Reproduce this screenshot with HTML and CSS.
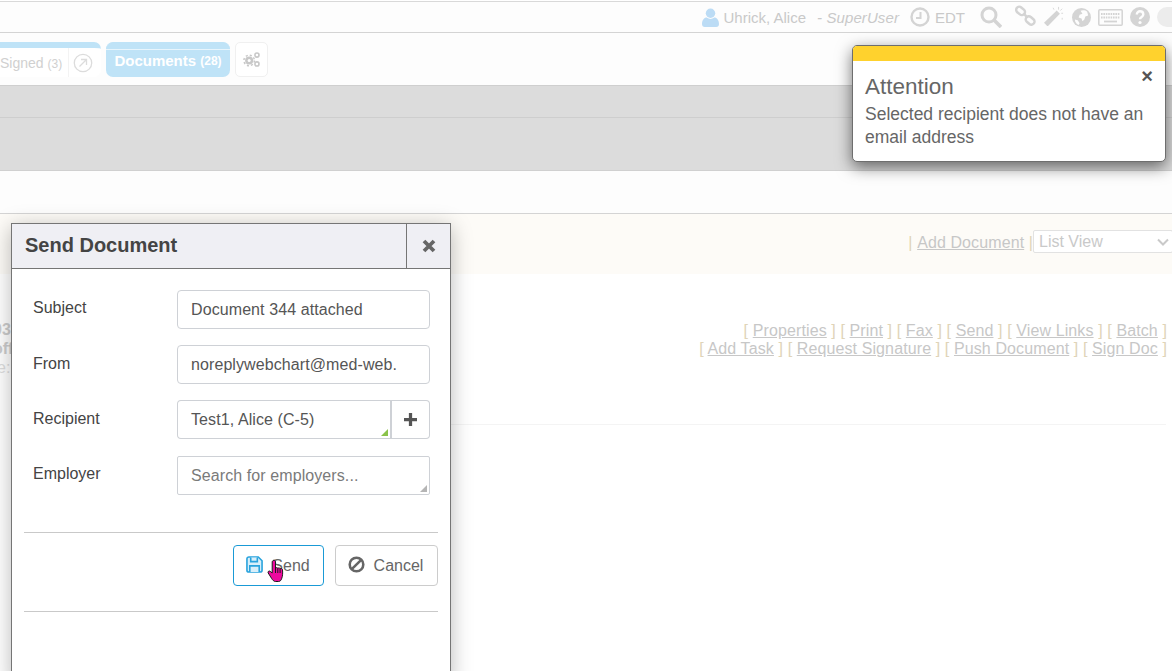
FILE: index.html
```html
<!DOCTYPE html>
<html lang="en">
<head>
<meta charset="utf-8">
<title>Send Document</title>
<link rel="stylesheet" href="styles.css">
</head>
<body>
<div class="page">
  <header class="topbar">
    <svg class="ico user" viewBox="0 0 18 20"><circle cx="9" cy="5.500" r="5"/><path d="M0 17c0-5 3-7 5-7 1.200 1 2.600 1.500 4 1.500s2.800-.5 4-1.500c2 0 5 2 5 7 0 2-1 3-3 3H3c-2 0-3-1-3-3z"/></svg>
    <span class="who">Uhrick, Alice</span>
    <em class="role">- SuperUser</em>
    <svg class="ico clock" viewBox="0 0 20 20"><circle cx="10" cy="10" r="8.500" fill="none" stroke-width="2.400"/><path d="M10.500 5v6H6" fill="none" stroke-width="2"/></svg>
    <span class="tz">EDT</span>
    <svg class="ico search" viewBox="0 0 22 22"><circle cx="9" cy="9" r="7" fill="none" stroke-width="3"/><path d="M14 14l7 7" fill="none" stroke-width="3.600"/></svg>
    <svg class="ico link" viewBox="0 0 22 22"><g fill="none" stroke-width="2.600"><rect x="1" y="3" width="10" height="6.500" rx="3.200" transform="rotate(40 6 6)"/><rect x="11" y="13" width="10" height="6.500" rx="3.200" transform="rotate(40 16 16)"/><path d="M9 9l4 4"/></g></svg>
    <svg class="ico wand" viewBox="0 0 22 22"><path d="M0 18.500L14 5l3.500 3.500L4 22.500z" stroke="none"/><path d="M16 1v3M20 3l-2 2M21 8h-2M10 2l1 2M20 13v2" fill="none" stroke-width="1"/></svg>
    <svg class="ico globe" viewBox="0 0 20 20"><circle cx="10" cy="10" r="10" stroke="none"/><path class="cut" d="M9 3c2-1 5-1 7 1l1 4-3 1-1 3-2 2-1-3-3-1 1-3 3-1zM3 12l3 1 2 3-1 2c-2-1-4-3-4-6z" stroke="none"/></svg>
    <svg class="ico keys" viewBox="0 0 25 17"><rect x=".8" y=".8" width="23.400" height="15.400" rx="1" fill="none" stroke-width="1.500"/><path d="M3 5h19M3 8.500h19" fill="none" stroke-width="1.800" stroke-dasharray="1.600 .8"/><path d="M6 12.500h13" fill="none" stroke-width="1.800"/></svg>
    <svg class="ico help" viewBox="0 0 20 20"><circle cx="10" cy="10" r="10" stroke="none"/><path class="cutline" d="M6.800 7.500c0-4.300 6.500-4.300 6.500 0 0 2.500-3.300 2.300-3.300 4.700" fill="none" stroke-width="2.400"/><circle class="cutfill" cx="10" cy="15.500" r="1.600" stroke="none"/></svg>
    <span class="avatar"></span>
  </header>

  <nav class="tabbar">
    <div class="tab tab-signed">
      <span class="tab-label">Signed <small>(3)</small></span>
      <span class="tab-pop"><svg viewBox="0 0 20 20"><circle cx="10" cy="10" r="8.700"/><path d="M6.500 13.500l7-7M8 6.500h5.500V12"/></svg></span>
    </div>
    <div class="tab tab-docs"><b>Documents</b>&nbsp;<b class="count">(28)</b></div>
    <button class="gear" type="button" aria-label="Settings">
      <svg viewBox="0 0 18 16"><circle class="g-body" cx="6.500" cy="9" r="4.300"/><circle class="g-teeth" cx="6.500" cy="9" r="5.600" stroke-dasharray="2.200 2.200"/><circle class="g-hole" cx="6.500" cy="9" r="1.600"/><circle class="g-small" cx="14.800" cy="3.300" r="2.200"/><circle class="g-small" cx="14.800" cy="12.700" r="2.200"/></svg>
    </button>
  </nav>

  <div class="grey-row grey-a"></div>
  <div class="grey-row grey-b"></div>
  <div class="plain-row"></div>

  <div class="cream">
    <span class="cream-links"><span class="pipe">|</span>&nbsp;<a>Add Document</a>&nbsp;<span class="pipe">|</span></span><span class="select">List View<svg viewBox="0 0 12 8"><path d="M1 1.500l5 5 5-5"/></svg></span>
  </div>

  <main class="content">
    <div class="stub"><b>03</b><b>off</b><span>e:</span></div>
    <div class="actions">
      <p><i>[</i> <a>Properties</a> <i>]</i> <i>[</i> <a>Print</a> <i>]</i> <i>[</i> <a>Fax</a> <i>]</i> <i>[</i> <a>Send</a> <i>]</i> <i>[</i> <a>View Links</a> <i>]</i> <i>[</i> <a>Batch</a> <i>]</i></p>
      <p><i>[</i> <a>Add Task</a> <i>]</i> <i>[</i> <a>Request Signature</a> <i>]</i> <i>[</i> <a>Push Document</a> <i>]</i> <i>[</i> <a>Sign Doc</a> <i>]</i></p>
    </div>
    <div class="rule"></div>
  </main>
</div>

<section class="toast">
  <div class="toast-bar"></div>
  <div class="toast-body">
    <span class="toast-x">×</span>
    <h2>Attention</h2>
    <p>Selected recipient does not have an email address</p>
  </div>
</section>

<section class="modal">
  <div class="modal-head">
    <h1>Send Document</h1>
    <span class="modal-close"><svg viewBox="0 0 14 14"><path d="M2 2l10 10M12 2L2 12"/></svg></span>
  </div>
  <div class="modal-body">
    <div class="field first"><label>Subject</label><div class="box">Document 344 attached</div></div>
    <div class="field"><label>From</label><div class="box">noreplywebchart@med-web.</div></div>
    <div class="field"><label>Recipient</label>
      <div class="box-group">
        <div class="box join">Test1, Alice (C-5)<span class="corner green"></span></div>
        <span class="add"><svg viewBox="0 0 12 12"><path d="M6 0v12M0 6h12"/></svg></span>
      </div>
    </div>
    <div class="field last"><label>Employer</label><div class="box square muted">Search for employers...<span class="corner grey"></span></div></div>
  </div>
  <div class="modal-foot">
    <button class="btn btn-send" type="button">
      <svg viewBox="0 0 18 18"><path d="M1 3a2 2 0 0 1 2-2h10l4 4v10a2 2 0 0 1-2 2H3a2 2 0 0 1-2-2z"/><path d="M5 1.500v4.500h7V1.500M4 17v-6.500h10V17"/></svg>
      <span>Send</span>
    </button>
    <button class="btn btn-cancel" type="button">
      <svg viewBox="0 0 18 18"><circle cx="9" cy="9" r="7.200"/><path d="M4 14L14 4"/></svg>
      <span>Cancel</span>
    </button>
    <svg class="hand" viewBox="0 0 18 24"><path d="M6 1.500c1.200-.8 2.500 0 2.500 1.300V9c.8-.6 1.800-.5 2.300.2.800-.5 1.800-.3 2.300.4.900-.4 2.200 0 2.400 1.200.3 3 .2 6-.7 8.400-.4 1.500-1.300 3.300-3.300 3.300H8.500c-1.700 0-3-1.600-4-3.200L1.200 14c-.7-1.200.7-2.700 2-1.700L5.200 14V3c0-.6.300-1.200.8-1.500z"/><path d="M8.500 9v5M10.800 9.300V14M13.100 9.700V14" fill="none"/></svg>
  </div>
  <div class="modal-rest"></div>
</section>
</body>
</html>
```
FILE: styles.css
```css
* { box-sizing: border-box; }
html, body { margin: 0; height: 100%; overflow: hidden; background: #fff; }
body { font-family: "Liberation Sans", Arial, sans-serif; color: #555; position: relative; }
.page { display: flex; flex-direction: column; height: 671px; }

.topbar { height: 32px; margin-top: 1px; border-top: 1px solid #d9d9d9; border-bottom: 1px solid #d4d4d4; background: #fdfdfd; display: flex; align-items: center; justify-content: flex-end; font-size: 15px; color: #c9c9c9; white-space: nowrap; }
.ico { flex: none; fill: #d4d4d4; stroke: #d4d4d4; }
.user { width: 17px; height: 19px; fill: #bcdcf5; stroke: none; margin-right: 5px; }
.who { margin-right: 11px; }
.role { margin-right: 11px; letter-spacing: .1px; }
.clock { width: 20px; height: 20px; margin-right: 5px; }
.tz { margin-right: 15px; }
.search { width: 22px; height: 22px; margin-right: 13px; }
.link { width: 21px; height: 21px; margin-right: 8px; margin-top: -3px; }
.wand { width: 20px; height: 20px; margin-right: 8px; margin-top: -3px; }
.globe { width: 19px; height: 19px; margin-right: 7px; }
.globe .cut { fill: #fdfdfd; }
.keys { width: 25px; height: 17px; margin-right: 7px; }
.help { width: 20px; height: 20px; margin-right: 7px; }
.help .cutline { stroke: #fdfdfd; }
.help .cutfill { fill: #fdfdfd; }
.avatar { width: 15px; height: 20px; border-radius: 10px 0 0 10px; background: #ececec; flex: none; }

.tabbar { height: 52px; background: #fdfdfd; display: flex; align-items: flex-start; padding-top: 9px; }
.tab { height: 35px; border-radius: 0 7px 7px 0; display: flex; align-items: center; border-top: 6px solid #bfe3f7; }
.tab-signed { width: 101px; background: #fff; justify-content: flex-end; font-size: 14px; color: #d0d0d0; }
.tab-signed small { font-size: 12px; }
.tab-label { margin-right: 6px; white-space: nowrap; }
.tab-pop { width: 33px; height: 100%; padding-right: 4px; border-left: 1px solid #f3f3f3; display: flex; align-items: center; justify-content: center; }
.tab-pop svg { width: 20px; height: 20px; fill: none; stroke: #dcdcdc; stroke-width: 1.300; }
.tab-docs { width: 124px; margin-left: 5px; border-radius: 7px; background: #bfe3f7; border-top: 1px solid #bfe3f7; color: #fff; font-size: 15px; justify-content: center; position: relative; }
.tab-docs::before { content: ""; position: absolute; left: 0; right: 0; top: 6px; height: 1px; background: #e8f5fc; }
.count { font-size: 12px; margin-top: 2px; }
.gear { width: 33px; height: 35px; margin-left: 5px; padding: 0; border: 1px solid #f0f0f0; border-radius: 5px; background: #fff; display: flex; align-items: center; justify-content: center; }
.gear svg { width: 17px; height: 15px; }
.g-body { fill: #c8c8c8; }
.g-teeth { fill: none; stroke: #c8c8c8; stroke-width: 1.600; }
.g-hole { fill: #fff; }
.g-small { fill: #fff; stroke: #c8c8c8; stroke-width: 1.700; }

.grey-row { background: #dcdcdc; flex: none; }
.grey-a { height: 33px; border-top: 1px solid #cfcfcf; border-bottom: 1px solid #cecece; }
.grey-b { height: 53px; border-bottom: 1px solid #d0d0d0; }
.plain-row { height: 43px; background: #fdfdfd; border-bottom: 1px solid #d4d4d4; flex: none; }

.cream { height: 60px; flex: none; background: #fdfbf7; display: flex; align-items: flex-start; justify-content: flex-end; padding-top: 16px; font-size: 16px; color: #c7c7c7; white-space: nowrap; overflow: hidden; }
.cream-links { margin-top: 4px; letter-spacing: .1px; }
.cream .pipe { color: #e0d4b8; }
a { text-decoration: underline; color: #c7c7c7; }
.select { width: 140px; height: 23px; margin-right: -1px; padding-left: 5px; flex: none; background: #fff; border: 1px solid #e2e2e2; border-radius: 2px; display: flex; align-items: center; justify-content: space-between; color: #c9c9c9; }
.select svg { width: 12px; height: 8px; margin-right: 3px; fill: none; stroke: #c9c9c9; stroke-width: 2; }

.content { flex: 1; background: #fff; position: relative; overflow: hidden; }
.stub { position: absolute; left: -7px; top: 46px; display: flex; flex-direction: column; font-size: 16px; line-height: 19px; color: #cdcdcd; }
.stub span { color: #dedede; padding-left: 4px; }
.actions { padding: 48px 5px 0 0; text-align: right; font-size: 16px; line-height: 18px; letter-spacing: .11px; color: #c7c7c7; }
.actions p { margin: 0; }
.actions i { font-style: normal; color: #e0d4b8; }
.rule { height: 1px; margin: 66px 6px 0 450px; background: #f4f4f4; }

.toast { position: absolute; left: 852px; top: 45px; width: 314px; height: 117px; border-radius: 5px; border: 1px solid #6e6e6e; background: #fff; overflow: hidden; box-shadow: 0 5px 16px rgba(0,0,0,.55); }
.toast-bar { height: 15px; background: #ffd22d; }
.toast-body { padding: 12px 12px 0; position: relative; color: #666; }
.toast h2 { margin: 0; font-size: 22.500px; font-weight: 400; line-height: 27px; }
.toast p { margin: 0; font-size: 17.500px; line-height: 23px; padding-top: 3px; }
.toast-x { position: absolute; right: 12px; top: 5px; font-size: 20px; line-height: 20px; font-weight: 700; color: #555; }

.modal { position: absolute; left: 11px; top: 223px; width: 440px; height: 460px; background: #fff; border: 1px solid #757575; box-shadow: 0 4px 20px rgba(0,0,0,.28); }
.modal-head { height: 45px; background: #efeff4; border-bottom: 1px solid #757575; display: flex; align-items: stretch; }
.modal-head h1 { flex: 1; margin: 0; padding-left: 13px; font-size: 20px; font-weight: 700; line-height: 42px; color: #444; }
.modal-close { width: 44px; border-left: 1px solid #757575; display: flex; align-items: center; justify-content: center; }
.modal-close svg { width: 14px; height: 14px; stroke: #666; stroke-width: 3.800; fill: none; }
.modal-body { padding: 21px 20px 0 21px; height: 263px; display: flex; flex-direction: column; gap: 16px; }
.field { display: flex; height: 39px; font-size: 16px; }
.field.last { margin-top: 1px; }
.field label { width: 144px; color: #444; padding-top: 10px; flex: none; }
.field.first label, .field.last label { padding-top: 9px; }
.box { flex: 1; height: 39px; border: 1px solid #ced1d6; border-radius: 4px; padding: 0 13px; line-height: 37px; color: #555; font-size: 16px; letter-spacing: .09px; white-space: nowrap; overflow: hidden; position: relative; }
.box.square { border-radius: 2px; }
.muted { color: #7a7a7a; }
.box-group { flex: 1; display: flex; }
.join { border-radius: 4px 0 0 4px; border-right-width: 2px; }
.add { width: 38px; height: 39px; flex: none; border: 1px solid #ced1d6; border-left: 0; border-radius: 0 4px 4px 0; display: flex; align-items: center; justify-content: center; }
.add svg { width: 13px; height: 13px; stroke: #555; stroke-width: 3; fill: none; }
.corner { position: absolute; right: 2px; bottom: 2px; width: 0; height: 0; border-style: solid; border-width: 0 0 7px 7px; border-color: transparent; }
.corner.green { border-bottom-color: #8bc34a; }
.corner.grey { border-bottom-color: #b5b5b5; }

.modal-foot { margin: 0 12px; height: 80px; border-top: 1px solid #c9c9c9; border-bottom: 1px solid #c9c9c9; display: flex; justify-content: flex-end; gap: 11px; padding-top: 12px; position: relative; }
.btn { height: 41px; padding: 0; background: #fff; border: 1px solid #ccc; border-radius: 4px; font: 16px "Liberation Sans", Arial, sans-serif; color: #666; display: flex; align-items: center; justify-content: center; }
.btn-send { width: 91px; border-color: #1a9ad6; gap: 9px; }
.btn-send svg { width: 17px; height: 17px; margin-top: -3px; margin-left: -1px; fill: #d8effa; stroke: #29a3dd; stroke-width: 1.700; }
.btn-cancel { width: 103px; padding-right: 2px; gap: 9px; }
.btn-cancel svg { width: 17px; height: 17px; margin-top: -3px; fill: none; stroke: #666; stroke-width: 2.700; }
.hand { position: absolute; left: 243px; top: 26px; width: 18px; height: 24px; fill: #ee0a9e; stroke: #1a1a1a; stroke-width: 1; }
.modal-rest { height: 60px; }
```
